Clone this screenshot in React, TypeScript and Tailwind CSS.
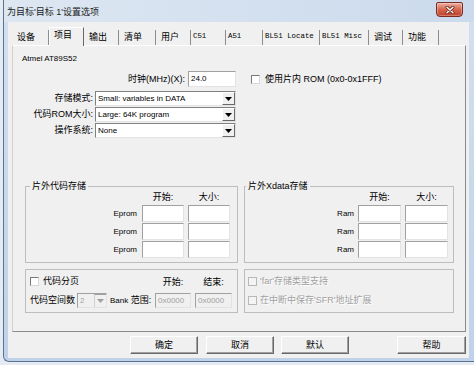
import React from 'react';

type Tab = { label: string; w: string; sel?: boolean; mono?: boolean };

const tabs: Tab[] = [
  { label: '设备', w: 'w-[37px]' },
  { label: '项目', w: 'w-[35px]', sel: true },
  { label: '输出', w: 'w-[35px]' },
  { label: '清单', w: 'w-[37px]' },
  { label: '用户', w: 'w-[35px]' },
  { label: 'C51', w: 'w-[35px]', mono: true },
  { label: 'A51', w: 'w-[37px]', mono: true },
  { label: 'BL51 Locate', w: 'w-[57px]', mono: true },
  { label: 'BL51 Misc', w: 'w-[49px]', mono: true },
  { label: '调试', w: 'w-[34px]' },
  { label: '功能', w: 'w-[36px]' },
];

function Edit({ className, value, disabled }: { className: string; value?: string; disabled?: boolean }) {
  return (
    <div
      className={`${className} flex items-center px-[2px] border border-t-[#a0a0a0] border-l-[#a0a0a0] border-r-[#e3e3e3] border-b-[#e3e3e3] text-[8px] ${
        disabled ? 'bg-[#f0f0f0] text-[#a0a0a0]' : 'bg-white'
      }`}
    >
      {value}
    </div>
  );
}

function Arrow({ color }: { color: string }) {
  return (
    <svg width="7" height="4" viewBox="0 0 7 4">
      <path d="M0 0H7L3.5 4Z" fill={color} />
    </svg>
  );
}

function Combo({ value }: { value: string }) {
  return (
    <div className="ml-[2px] w-[141px] h-[15px] flex bg-white border border-t-[#808080] border-l-[#808080] border-r-[#e3e3e3] border-b-[#e3e3e3]">
      <span className="flex-1 pl-[2px] text-[8px] leading-[13px]">{value}</span>
      <span className="w-[13px] h-full flex items-center justify-center bg-[#f0f0f0] border border-t-white border-l-white border-r-[#696969] border-b-[#696969]">
        <Arrow color="#000" />
      </span>
    </div>
  );
}

function Check({ disabled }: { disabled?: boolean }) {
  return (
    <span
      className={`block w-[9px] h-[9px] shrink-0 border ${
        disabled
          ? 'border-[#b8b8b8] bg-[#f4f4f4]'
          : 'border-t-[#7a7a7a] border-l-[#7a7a7a] border-r-[#d8d8d8] border-b-[#d8d8d8] bg-white'
      }`}
    />
  );
}

function Btn({ label, className }: { label: string; className: string }) {
  return (
    <div
      className={`${className} h-[18px] flex items-center justify-center bg-[#f0f0f0] border border-t-white border-l-white border-r-[#696969] border-b-[#696969] shadow-[inset_-1px_-1px_0_#a0a0a0]`}
    >
      {label}
    </div>
  );
}

export default function App() {
  return (
    <div className="w-[474px] h-[365px] overflow-hidden bg-[#e4ebf3] text-black text-[9px] leading-none font-['Liberation_Sans','Noto_Sans_CJK_SC',sans-serif]">
      <div className="ml-[3px] h-[362px] flex flex-col bg-gradient-to-b from-[#d3e0ef] to-[#bfd2e9] border-l border-b border-[#5b7290] rounded-bl-[6px]">
        {/* title bar */}
        <div className="h-[22px] flex items-start justify-between pl-[3px] pr-[11px] bg-gradient-to-r from-[#dde7f2] to-[#cbdaec]">
          <span className="mt-[8px] text-[#1a1a1a]">为目标'目标 1'设置选项</span>
          <div className="mt-[2px] w-[27px] h-[15px] rounded-b-[4px] rounded-t-[2px] border border-[#7a2c22] bg-gradient-to-b from-[#eab0a3] via-[#d4654e] to-[#c0402a] flex items-center justify-center shadow-[inset_0_0_0_1px_rgba(255,255,255,0.3)]">
            <svg width="10" height="8" viewBox="0 0 10 8">
              <path d="M2 1.2L8 6.8M8 1.2L2 6.8" stroke="#6b1f15" strokeWidth="3" strokeLinecap="round" />
              <path d="M2 1.2L8 6.8M8 1.2L2 6.8" stroke="#fff" strokeWidth="1.5" strokeLinecap="round" />
            </svg>
          </div>
        </div>

        {/* client */}
        <div className="flex-1 ml-[4px] mr-[5px] mb-[3px] bg-[#f0f0f0] flex flex-col">
          {/* tabs */}
          <div className="h-[23px] flex items-end pl-[4px]">
            {tabs.map((t) =>
              t.sel ? (
                <div
                  key={t.label}
                  className={`${t.w} h-[19px] -mb-px relative z-10 bg-[#f0f0f0] border-t border-l border-r border-t-white border-l-white border-r-[#696969] pl-[4px] pt-[3px]`}
                >
                  {t.label}
                </div>
              ) : (
                <div
                  key={t.label}
                  className={`${t.w} h-[15px] border-r border-r-[#8c8c8c] pt-[3px] whitespace-nowrap overflow-hidden ${
                    t.mono ? "pl-[2px] font-['Liberation_Mono',monospace] text-[7.4px]" : 'pl-[5px]'
                  }`}
                >
                  {t.label}
                </div>
              )
            )}
          </div>

          {/* tab page */}
          <div className="ml-[4px] mr-[3px] h-[287px] flex flex-col pl-[9px] border border-t-white border-l-[#d0d0d0] border-r-[#8a8a8a] border-b-[#8a8a8a]">
            <div className="mt-[8px] h-[10px] leading-[10px] text-[8px]">Atmel AT89S52</div>

            <div className="mt-[7px] h-[16px] flex items-center">
              <span className="w-[163px] text-right">时钟(MHz)(X):</span>
              <Edit className="ml-[3px] w-[48px] h-[16px]" value="24.0" />
              <span className="ml-[15px]"><Check /></span>
              <span className="ml-[5px]">使用片内 ROM (0x0-0x1FFF)</span>
            </div>

            <div className="mt-[4px] h-[15px] flex items-center">
              <span className="w-[71px] text-right">存储模式:</span>
              <Combo value="Small: variables in DATA" />
            </div>
            <div className="mt-[1px] h-[15px] flex items-center">
              <span className="w-[71px] text-right">代码ROM大小:</span>
              <Combo value="Large: 64K program" />
            </div>
            <div className="mt-[1px] h-[15px] flex items-center">
              <span className="w-[71px] text-right">操作系统:</span>
              <Combo value="None" />
            </div>

            {/* memory groups */}
            <div className="mt-[43px] flex gap-[6px] pl-[3px]">
              <fieldset className="w-[213px] h-[82px] border border-[#bdbdbd]">
                <legend className="ml-[4px] px-[2px] leading-[11px]">片外代码存储</legend>
                <div className="flex h-[11px] items-center">
                  <span className="w-[116px]" />
                  <span className="w-[42px] text-center">开始:</span>
                  <span className="ml-[4px] w-[42px] text-center">大小:</span>
                </div>
                {[0, 1, 2].map((i) => (
                  <div key={i} className={`flex items-center h-[17px] ${i === 0 ? 'mt-[2px]' : 'mt-[1px]'}`}>
                    <span className="w-[111px] text-right text-[8px]">Eprom</span>
                    <Edit className="ml-[5px] w-[42px] h-[17px]" />
                    <Edit className="ml-[4px] w-[42px] h-[17px]" />
                  </div>
                ))}
              </fieldset>
              <fieldset className="w-[210px] h-[82px] border border-[#bdbdbd]">
                <legend className="ml-[1px] px-[2px] leading-[11px]">片外Xdata存储</legend>
                <div className="flex h-[11px] items-center">
                  <span className="w-[113px]" />
                  <span className="w-[43px] text-center">开始:</span>
                  <span className="ml-[4px] w-[43px] text-center">大小:</span>
                </div>
                {[0, 1, 2].map((i) => (
                  <div key={i} className={`flex items-center h-[17px] ${i === 0 ? 'mt-[2px]' : 'mt-[1px]'}`}>
                    <span className="w-[109px] text-right text-[8px]">Ram</span>
                    <Edit className="ml-[4px] w-[43px] h-[17px]" />
                    <Edit className="ml-[4px] w-[43px] h-[17px]" />
                  </div>
                ))}
              </fieldset>
            </div>

            {/* paging / misc groups */}
            <div className="mt-[6px] flex gap-[6px] pl-[3px]">
              <fieldset className="w-[213px] h-[44px] border border-[#bdbdbd] pl-[4px]">
                <div className="mt-[5px] h-[12px] flex items-center">
                  <span className="w-[125px] flex items-center">
                    <Check />
                    <span className="ml-[4px]">代码分页</span>
                  </span>
                  <span className="w-[36px] text-center pt-[3px]">开始:</span>
                  <span className="ml-[4px] w-[37px] text-center pt-[3px]">结束:</span>
                </div>
                <div className="mt-[6px] h-[15px] flex items-center">
                  <span className="w-[47px]">代码空间数</span>
                  <div className="w-[30px] h-[15px] flex bg-[#f0f0f0] border border-t-[#a0a0a0] border-l-[#a0a0a0] border-r-[#e3e3e3] border-b-[#e3e3e3]">
                    <span className="flex-1 pl-[2px] text-[8px] leading-[13px] text-[#a0a0a0]">2</span>
                    <span className="w-[12px] flex items-center justify-center border-l border-t border-l-[#d0d0d0] border-t-[#a0a0a0]">
                      <Arrow color="#a0a0a0" />
                    </span>
                  </div>
                  <span className="w-[48px] pl-[3px]">
                    <span className="text-[8px]">Bank</span> 范围:
                  </span>
                  <Edit className="w-[36px] h-[15px]" value="0x0000" disabled />
                  <Edit className="ml-[4px] w-[37px] h-[15px]" value="0x0000" disabled />
                </div>
              </fieldset>
              <fieldset className="w-[210px] h-[44px] border border-[#bdbdbd] pl-[3px] text-[#a0a0a0] [text-shadow:1px_1px_0_#fff]">
                <div className="mt-[5px] h-[12px] flex items-center">
                  <Check disabled />
                  <span className="ml-[3px]">'far'存储类型支持</span>
                </div>
                <div className="mt-[7px] h-[12px] flex items-center">
                  <Check disabled />
                  <span className="ml-[3px]">在中断中保存'SFR'地址扩展</span>
                </div>
              </fieldset>
            </div>
          </div>

          {/* dialog buttons */}
          <div className="mt-[4px] h-[18px] flex pl-[122px] pr-[3px]">
            <Btn label="确定" className="w-[68px]" />
            <Btn label="取消" className="ml-[8px] w-[68px]" />
            <Btn label="默认" className="ml-[7px] w-[68px]" />
            <Btn label="帮助" className="ml-auto w-[69px]" />
          </div>
        </div>
      </div>
    </div>
  );
}
